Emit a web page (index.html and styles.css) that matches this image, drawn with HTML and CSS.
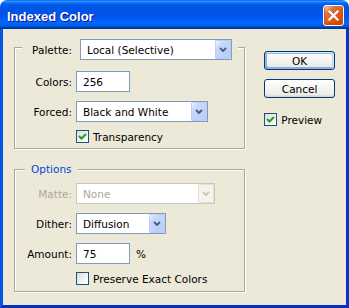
FILE: index.html
```html
<!DOCTYPE html>
<html lang="en">
<head>
    <meta charset="UTF-8">
    <title>Indexed Color</title>
    <link rel="stylesheet" href="styles.css">
</head>
<body>
    <div class="window">
        <!-- title bar -->
        <div class="titlebar">
            <span class="title">Indexed Color</span>
            <div class="close">
                <svg width="13" height="13" viewBox="0 0 13 13"><path d="M2.5 2.5l8 8M10.5 2.5l-8 8" stroke="#fff" stroke-width="2.2" stroke-linecap="square"/></svg>
            </div>
        </div>

        <div class="client">
            <div class="left">
                <!-- palette group -->
                <div class="group palette">
                    <div class="group-head">
                        <span class="head-label">Palette:</span>
                        <div class="combo w-palette">
                            <span class="combo-text">Local (Selective)</span>
                            <span class="drop"><svg width="8" height="5" viewBox="0 0 8 5"><path d="M1 1l3 3 3-3" fill="none" stroke="#4d6185" stroke-width="2"/></svg></span>
                        </div>
                    </div>
                    <div class="row first">
                        <span class="label">Colors:</span>
                        <div class="field">256</div>
                    </div>
                    <div class="row">
                        <span class="label">Forced:</span>
                        <div class="combo w-forced">
                            <span class="combo-text">Black and White</span>
                            <span class="drop"><svg width="8" height="5" viewBox="0 0 8 5"><path d="M1 1l3 3 3-3" fill="none" stroke="#4d6185" stroke-width="2"/></svg></span>
                        </div>
                    </div>
                    <div class="check-row">
                        <span class="box"><svg width="11" height="11" viewBox="0 0 11 11"><path d="M2 5l2.5 2.5L9 3" fill="none" stroke="#21a121" stroke-width="2"/></svg></span>
                        <span>Transparency</span>
                    </div>
                </div>

                <!-- options group -->
                <div class="group options">
                    <div class="group-head legend">Options</div>
                    <div class="row first disabled">
                        <span class="label">Matte:</span>
                        <div class="combo w-matte">
                            <span class="combo-text">None</span>
                            <span class="drop"><svg width="8" height="5" viewBox="0 0 8 5"><path d="M1 1l3 3 3-3" fill="none" stroke="#c9c7ba" stroke-width="2"/></svg></span>
                        </div>
                    </div>
                    <div class="row">
                        <span class="label">Dither:</span>
                        <div class="combo w-dither">
                            <span class="combo-text">Diffusion</span>
                            <span class="drop"><svg width="8" height="5" viewBox="0 0 8 5"><path d="M1 1l3 3 3-3" fill="none" stroke="#4d6185" stroke-width="2"/></svg></span>
                        </div>
                    </div>
                    <div class="row">
                        <span class="label">Amount:</span>
                        <div class="field">75</div>
                        <span class="unit">%</span>
                    </div>
                    <div class="check-row">
                        <span class="box"></span>
                        <span>Preserve Exact Colors</span>
                    </div>
                </div>
            </div>

            <!-- buttons -->
            <div class="right">
                <div class="btn default">OK</div>
                <div class="btn">Cancel</div>
                <div class="check-row preview">
                    <span class="box"><svg width="11" height="11" viewBox="0 0 11 11"><path d="M2 5l2.5 2.5L9 3" fill="none" stroke="#21a121" stroke-width="2"/></svg></span>
                    <span>Preview</span>
                </div>
            </div>
        </div>
    </div>
</body>
</html>
```

FILE: styles.css
```css
* {
    margin: 0;
    padding: 0;
    box-sizing: border-box;
}
body {
    background: #fff;
    font-family: "DejaVu Sans", sans-serif;
    font-size: 10.5px;
    color: #000;
}
.window {
    width: 349px;
    height: 308px;
    display: flex;
    flex-direction: column;
}
/* title bar */
.titlebar {
    height: 29px;
    display: flex;
    align-items: flex-start;
    justify-content: space-between;
    padding: 0 5px 0 7px;
    border-radius: 7px 7px 0 0;
    background: linear-gradient(180deg, #0058ee 0%, #3593ff 4%, #288eff 6%, #127dff 8%, #036ffc 10%, #0262ee 14%, #0057e5 20%, #0054e3 24%, #0055eb 56%, #005bf5 66%, #026afe 76%, #0062ef 86%, #0052d6 92%, #0040ab 94%, #003092 100%);
}
.title {
    margin-top: 10px;
    line-height: 13px;
    font-family: "Liberation Sans", sans-serif;
    font-weight: bold;
    font-size: 13px;
    color: #fff;
    text-shadow: 1px 1px #0f1089;
}
.close {
    margin-top: 5px;
    width: 21px;
    height: 21px;
    border: 1px solid #fff;
    border-radius: 3px;
    background: radial-gradient(circle at 90% 90%, #cc4600 0%, #dc6527 55%, #cd7546 70%, #ffccb2 90%, #fff 100%);
    box-shadow: inset 0 -1px 2px 1px #da4600;
    display: flex;
    justify-content: center;
    align-items: center;
}
/* client area */
.client {
    flex: 1;
    display: flex;
    background: #ece9d8;
    border-left: 3px solid #0756e8;
    border-right: 3px solid #0736c8;
    border-bottom: 3px solid #0a2dbd;
    padding: 18px 11px 0 11px;
}
.left {
    width: 232px;
}
.group {
    width: 231px;
    border: 1px solid #aca899;
    box-shadow: 1px 1px 0 #fff, inset 1px 1px 0 #fff;
    display: flex;
    flex-direction: column;
}
.palette {
    padding-bottom: 5px;
}
.options {
    margin-top: 20px;
    padding-bottom: 6px;
}
.group-head {
    align-self: flex-start;
    display: flex;
    align-items: center;
    background: #ece9d8;
    padding: 0 6px;
    margin: -9px 0 0 7px;
}
.head-label {
    width: 44px;
    text-align: right;
    margin-right: 8px;
}
.legend {
    margin: -7px 0 0 10px;
    line-height: 13px;
    color: #0046d5;
}
.row {
    display: flex;
    align-items: center;
    margin-top: 9px;
}
.row.first {
    margin-top: 11px;
}
.options .row.first {
    margin-top: 7px;
}
.label {
    width: 57px;
    margin-right: 4px;
    text-align: right;
}
.field {
    width: 54px;
    height: 21px;
    border: 1px solid #7f9db9;
    background: #fff;
    padding-left: 6px;
    display: flex;
    align-items: center;
}
.unit {
    margin-left: 6px;
}
/* combo boxes */
.combo {
    height: 21px;
    border: 1px solid #7f9db9;
    background: #fff;
    display: flex;
    align-items: center;
}
.combo-text {
    flex: 1;
    padding-left: 6px;
}
.drop {
    width: 16px;
    height: 19px;
    border: 1px solid #bccff9;
    border-radius: 1px;
    background: linear-gradient(135deg, #f0f4fe 0%, #c9d9fc 25%, #b6cbf7 100%);
    display: flex;
    justify-content: center;
    align-items: center;
}
.w-palette { width: 152px; }
.w-forced { width: 132px; }
.w-matte { width: 139px; }
.w-dither { width: 90px; }
.disabled .label,
.disabled .combo-text {
    color: #aca899;
}
.disabled .combo {
    border-color: #c9c7ba;
}
.disabled .drop {
    border-color: #e3e1d6;
    background: #f4f3ee;
}
/* check boxes */
.check-row {
    display: flex;
    align-items: center;
    height: 13px;
    margin: 8px 0 0 61px;
}
.box {
    width: 13px;
    height: 13px;
    margin-right: 4px;
    border: 1px solid #1c5180;
    background: linear-gradient(135deg, #dcdcd7 0%, #fff 90%);
    display: flex;
    justify-content: center;
    align-items: center;
}
/* right column */
.right {
    width: 71px;
    margin-left: 19px;
    display: flex;
    flex-direction: column;
}
.btn {
    height: 19px;
    margin-top: 9px;
    border: 1px solid #003c74;
    border-radius: 3px;
    background: linear-gradient(180deg, #fff 0%, #ecebe6 86%, #d6d0c5 100%);
    display: flex;
    justify-content: center;
    align-items: center;
}
.btn.default {
    margin-top: 4px;
    box-shadow: inset -1px 1px #cee7ff, inset 1px 2px #98b8ea, inset -2px 2px #bcd4f6, inset 1px -1px #89ade4, inset 2px -2px #89ade4;
}
.preview {
    margin: 15px 0 0 0;
}
```
